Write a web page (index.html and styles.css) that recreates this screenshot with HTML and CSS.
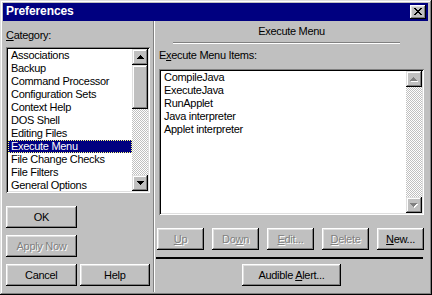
FILE: index.html
```html
<!DOCTYPE html>
<html>
<head>
<meta charset="utf-8">
<link rel="stylesheet" href="styles.css">
</head>
<body>
<div class="window">
  <div class="titlebar">
    <span class="title">Preferences</span>
    <button class="close" aria-label="Close">
      <svg width="8" height="7" viewBox="0 0 8 7" shape-rendering="crispEdges"><path d="M0 0h2v1H0zM6 0h2v1H6zM1 1h2v1H1zM5 1h2v1H5zM2 2h4v1H2zM3 3h2v1H3zM2 4h4v1H2zM1 5h2v1H1zM5 5h2v1H5zM0 6h2v1H0zM6 6h2v1H6z" fill="#000"/></svg>
    </button>
  </div>
  <div class="body">
    <div class="left">
      <div class="label"><u>C</u>ategory:</div>
      <div class="listbox cat">
        <ul class="items">
          <li>Associations</li>
          <li>Backup</li>
          <li>Command Processor</li>
          <li>Configuration Sets</li>
          <li>Context Help</li>
          <li>DOS Shell</li>
          <li>Editing Files</li>
          <li class="selected">Execute Menu</li>
          <li>File Change Checks</li>
          <li>File Filters</li>
          <li>General Options</li>
        </ul>
        <div class="vscroll">
          <div class="sbtn"><svg width="7" height="4" viewBox="0 0 7 4" shape-rendering="crispEdges"><path d="M3 0h1v1h1v1h1v1h1v1H0V3h1V2h1V1h1z" fill="#000"/></svg></div>
          <div class="thumb"></div>
          <div class="track"></div>
          <div class="sbtn"><svg width="7" height="4" viewBox="0 0 7 4" shape-rendering="crispEdges"><path d="M0 0h7v1H6v1H5v1H4v1H3V3H2V2H1V1H0z" fill="#000"/></svg></div>
        </div>
      </div>
      <div class="left-buttons">
        <button class="btn wide">OK</button>
        <button class="btn wide" disabled>Apply Now</button>
        <div class="btn-pair">
          <button class="btn wide">Cancel</button>
          <button class="btn wide">Help</button>
        </div>
      </div>
    </div>
    <div class="divider"></div>
    <div class="right">
      <div class="heading">Execute Menu</div>
      <div class="groove"></div>
      <div class="label">E<u>x</u>ecute Menu Items:</div>
      <div class="listbox menu">
        <ul class="items">
          <li>CompileJava</li>
          <li>ExecuteJava</li>
          <li>RunApplet</li>
          <li>Java interpreter</li>
          <li>Applet interpreter</li>
        </ul>
        <div class="vscroll">
          <div class="sbtn"><svg width="8" height="5" viewBox="0 0 8 5" shape-rendering="crispEdges"><path d="M4 1h1v1h1v1h1v1h1v1H1V4h1V3h1V2h1z" fill="#fff"/><path d="M3 0h1v1h1v1h1v1h1v1H0V3h1V2h1V1h1z" fill="#808080"/></svg></div>
          <div class="track"></div>
          <div class="sbtn"><svg width="8" height="5" viewBox="0 0 8 5" shape-rendering="crispEdges"><path d="M1 1h7v1H7v1H6v1H5v1H4V4H3V3H2V2H1z" fill="#fff"/><path d="M0 0h7v1H6v1H5v1H4v1H3V3H2V2H1V1H0z" fill="#808080"/></svg></div>
        </div>
      </div>
      <div class="action-row">
        <button class="btn small" disabled><u>U</u>p</button>
        <button class="btn small" disabled>Do<u>w</u>n</button>
        <button class="btn small" disabled><u>E</u>dit...</button>
        <button class="btn small" disabled><u>D</u>elete</button>
        <button class="btn small"><u>N</u>ew...</button>
      </div>
      <div class="blackline"></div>
      <button class="btn audible">Audible <u>A</u>lert...</button>
    </div>
  </div>
</div>
</body>
</html>
```
FILE: styles.css
```css
* {
  box-sizing: border-box;
  margin: 0;
  padding: 0;
}

html, body {
  width: 432px;
  height: 295px;
  overflow: hidden;
}

body {
  background: #c0c0c0;
  font-family: "Liberation Sans", Arial, sans-serif;
  font-size: 11px;
  line-height: 13px;
  letter-spacing: -0.3px;
  color: #000;
}

u {
  text-decoration: underline;
  text-underline-offset: 1px;
}

.window {
  width: 432px;
  height: 295px;
  background: #c0c0c0;
  padding: 3px 4px 3px 3px;
  display: flex;
  flex-direction: column;
  box-shadow: inset -1px -1px #000, inset 1px 1px #dfdfdf, inset -2px -2px #808080, inset 2px 2px #fff;
}

.titlebar {
  height: 18px;
  background: #000080;
  display: flex;
  align-items: center;
  padding-left: 3px;
  flex: none;
}

.title {
  align-self: flex-start;
  color: #fff;
  font-weight: bold;
  font-size: 12px;
  line-height: 16px;
  letter-spacing: -0.1px;
}

.close {
  margin-left: auto;
  margin-right: 2px;
  width: 16px;
  height: 14px;
  border: none;
  background: #c0c0c0;
  box-shadow: inset -1px -1px #000, inset 1px 1px #fff, inset -2px -2px #808080, inset 2px 2px #dfdfdf;
  display: flex;
  align-items: flex-start;
  justify-content: flex-start;
  padding: 3px 0 0 4px;
}

.close svg {
  display: block;
}

.body {
  flex: 1;
  display: flex;
}

.left {
  width: 147px;
  padding-left: 3px;
  display: flex;
  flex-direction: column;
  flex: none;
}

.label {
  height: 13px;
  white-space: nowrap;
}

.left .label {
  margin-top: 8px;
}

.listbox {
  background: #fff;
  padding: 2px;
  display: flex;
  box-shadow: inset 1px 1px #808080, inset -1px -1px #fff, inset 2px 2px #000, inset -2px -2px #dfdfdf;
  height: 146px;
  flex: none;
}

.listbox.cat {
  margin-top: 5px;
  width: 144px;
}

.items {
  list-style: none;
  flex: 1;
  overflow: hidden;
  min-width: 0;
}

.items li {
  height: 13px;
  line-height: 13px;
  padding-left: 3px;
  white-space: nowrap;
}

.items li.selected {
  background: #000080;
  color: #fff;
  outline: 1px dotted #ffff80;
  outline-offset: -1px;
}

.vscroll {
  width: 16px;
  display: flex;
  flex-direction: column;
  flex: none;
}

.sbtn,
.thumb {
  background: #c0c0c0;
  box-shadow: inset -1px -1px #000, inset 1px 1px #dfdfdf, inset -2px -2px #808080, inset 2px 2px #fff;
}

.sbtn {
  height: 16px;
  display: flex;
  align-items: center;
  justify-content: center;
  flex: none;
}

.sbtn svg {
  display: block;
}

.thumb {
  height: 44px;
  flex: none;
}

.track {
  flex: 1;
  background: repeating-conic-gradient(#c0c0c0 0 25%, #fff 0 50%) 0 0 / 2px 2px;
}

.left-buttons {
  margin-top: 13px;
  display: flex;
  flex-direction: column;
  gap: 7px;
}

.btn-pair {
  display: flex;
  gap: 3px;
}

.btn {
  font: inherit;
  letter-spacing: inherit;
  color: #000;
  border: none;
  background: #c0c0c0;
  box-shadow: inset -1px -1px #000, inset 1px 1px #fff, inset -2px -2px #808080, inset 2px 2px #dfdfdf;
  height: 22px;
  padding: 0;
  text-align: center;
  line-height: 13px;
  white-space: nowrap;
}

.btn:disabled {
  color: #808080;
  text-shadow: 1px 1px 0 #fff;
}

.btn.wide {
  width: 71px;
}

.divider {
  margin-left: 3px;
  width: 2px;
  border-left: 1px solid #808080;
  border-right: 1px solid #fff;
  flex: none;
}

.right {
  flex: 1;
  padding: 0 4px;
  display: flex;
  flex-direction: column;
}

.heading {
  margin-top: 4px;
  height: 13px;
  text-align: center;
}

.groove {
  margin-top: 4px;
  margin-left: 14px;
  width: 227px;
  height: 2px;
  border-top: 1px solid #808080;
  border-bottom: 1px solid #fff;
}

.right .label {
  margin-top: 5px;
}

.listbox.menu {
  margin-top: 7px;
  width: 265px;
}

.menu .items li {
  padding-left: 3px;
}

.action-row {
  margin-top: 13px;
  margin-left: -2px;
  width: 267px;
  display: flex;
  justify-content: space-between;
}

.btn.small {
  width: 47px;
}

.blackline {
  margin-top: 7px;
  margin-left: -3px;
  width: 267px;
  height: 2px;
  background: #000;
}

.btn.audible {
  margin: 5px auto 0;
  width: 99px;
}
```
